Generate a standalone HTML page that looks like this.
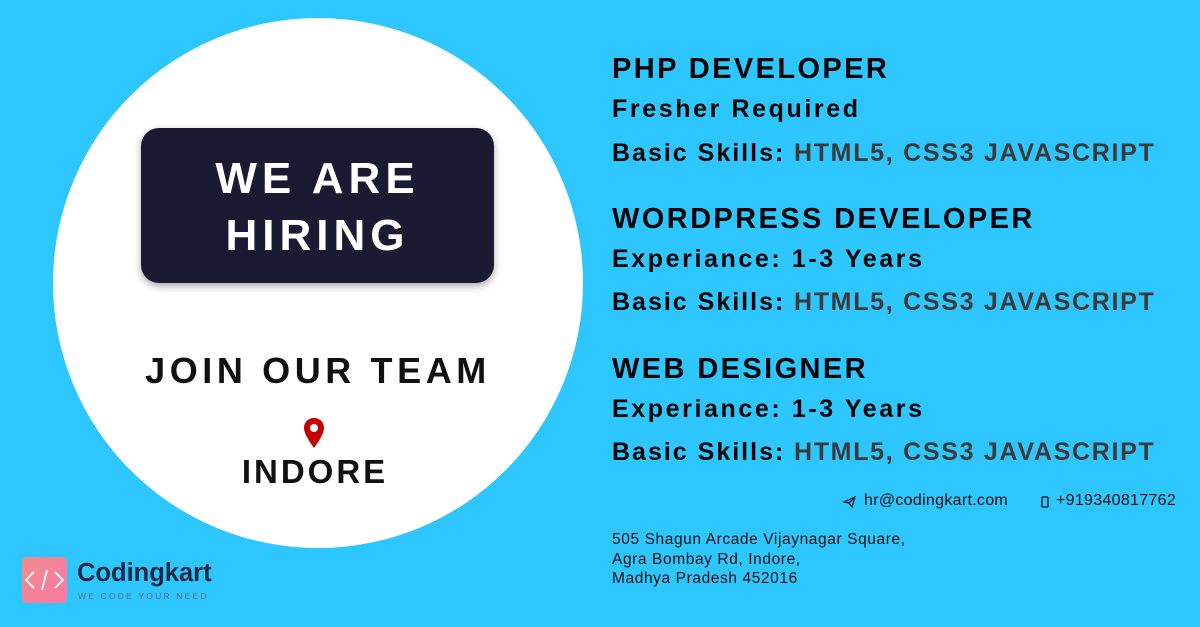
<!DOCTYPE html>
<html><head><meta charset="utf-8"><style>
*{margin:0;padding:0;box-sizing:border-box}
body{width:1200px;height:627px;background:#2ec6fe;position:relative;overflow:hidden;font-family:"Liberation Sans",sans-serif;font-weight:bold}
.circle{position:absolute;left:53px;top:18px;width:530px;height:530px;border-radius:50%;background:#fff}
.box{position:absolute;left:141px;top:128px;width:353px;height:155px;background:#1b1a33;border-radius:18px;box-shadow:0 3px 8px rgba(0,0,0,.35);color:#fff;text-align:center;font-size:44px;letter-spacing:5px;line-height:57px;padding-top:22px}
.t{position:absolute;white-space:nowrap}
.join{left:0;width:636px;text-align:center;top:350px;font-size:36px;letter-spacing:4.6px;color:#111}
.ind{left:0;width:630px;text-align:center;top:453px;font-size:33px;letter-spacing:3px;color:#111}
.h{left:612px;font-size:29px;letter-spacing:2.4px;color:#050505}
.s{left:612px;font-size:25px;letter-spacing:2.6px;color:#050505}
.k{letter-spacing:2px}
.s span{color:#3a3a3a;letter-spacing:1.7px}
.small{font-size:16px;font-weight:normal;color:#111}
</style></head><body>
<div class="circle"></div>
<div class="box">WE ARE<br>HIRING</div>
<div class="t join">JOIN OUR TEAM</div>
<svg style="position:absolute;left:303px;top:417px" width="22" height="32" viewBox="0 0 22 32"><path d="M11 1C5 1 1 5.5 1 11c0 7 10 20 10 20s10-13 10-20C21 5.5 17 1 11 1z" fill="#c40000"/><circle cx="11" cy="11" r="4" fill="#fff"/></svg>
<div class="t ind">INDORE</div>
<div class="t h" style="top:53px">PHP DEVELOPER</div>
<div class="t s" style="top:95px">Fresher Required</div>
<div class="t s k" style="top:139px">Basic Skills:<span> HTML5, CSS3 JAVASCRIPT</span></div>
<div class="t h" style="top:203px">WORDPRESS DEVELOPER</div>
<div class="t s" style="top:245px">Experiance: 1-3 Years</div>
<div class="t s k" style="top:288px">Basic Skills:<span> HTML5, CSS3 JAVASCRIPT</span></div>
<div class="t h" style="top:353px">WEB DESIGNER</div>
<div class="t s" style="top:395px">Experiance: 1-3 Years</div>
<div class="t s k" style="top:438px">Basic Skills:<span> HTML5, CSS3 JAVASCRIPT</span></div>
<svg style="position:absolute;left:843px;top:496px" width="13" height="12" viewBox="0 0 13 12"><path d="M1 6L12 1 9 11 6 7z M6 7L12 1" fill="none" stroke="#223" stroke-width="1.3"/></svg>
<div class="t small" style="left:864px;top:492px;letter-spacing:0.3px">hr@codingkart.com</div>
<svg style="position:absolute;left:1041px;top:496px" width="8" height="12"><rect x="1" y="1" width="6" height="10" rx="1" fill="none" stroke="#111" stroke-width="1.3"/></svg>
<div class="t small" style="left:1056px;top:492px;letter-spacing:0.3px">+919340817762</div>
<div class="t small" style="left:612px;top:530px;font-size:15.5px;line-height:19.5px;letter-spacing:0.6px">505 Shagun Arcade Vijaynagar Square,<br>Agra Bombay Rd, Indore,<br>Madhya Pradesh 452016</div>
<div style="position:absolute;left:22px;top:557px;width:45px;height:46px;border-radius:5px;background:linear-gradient(135deg,#f08c8c,#fb79a4)"></div>
<svg style="position:absolute;left:22px;top:557px" width="45" height="46" viewBox="0 0 45 46"><path d="M12 15L4 23l8 8M33 15l8 8-8 8M25 13l-5 20" fill="none" stroke="#fff" stroke-width="1.8"/></svg>
<div class="t" style="left:77px;top:559px;font-size:25.5px;color:#1b2a44">Codingkart</div>
<div class="t" style="left:78px;top:591px;font-size:8.5px;letter-spacing:2.2px;color:#5a6a80;font-weight:normal">WE CODE YOUR NEED</div>
</body></html>
